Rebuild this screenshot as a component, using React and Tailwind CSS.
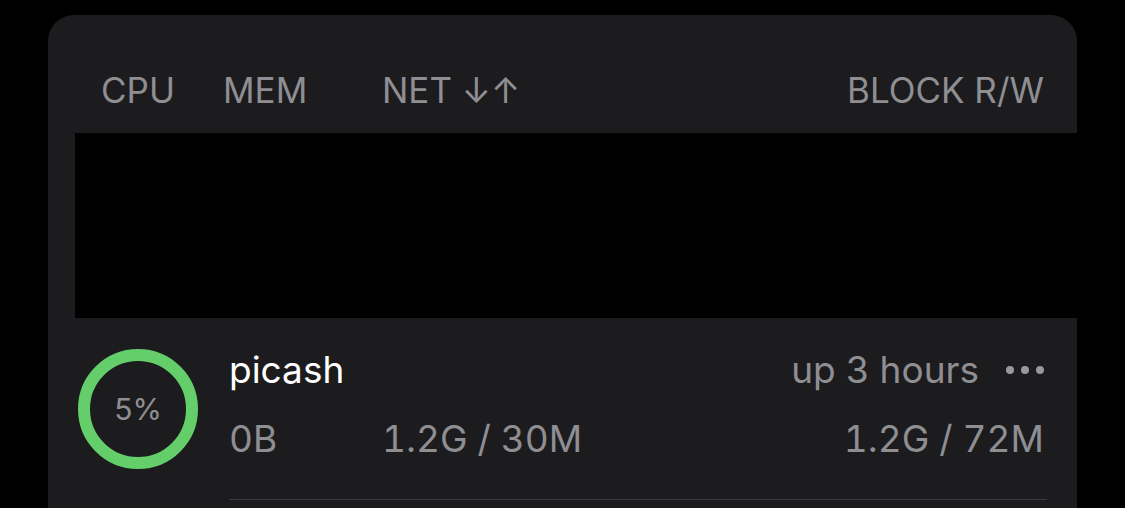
export default function App() {
  const font = { fontFamily: 'Inter, "Noto Sans", sans-serif' };
  return (
    <div className="w-[1125px] h-[508px] bg-black overflow-hidden" style={font}>
      <div className="ml-[48px] mt-[15px] w-[1029px] h-[600px] bg-[#1c1c1e] rounded-t-[26px]">
        <div className="h-[118px] flex items-center pl-[53px] pr-[33px] pt-[32px] text-[35px] text-[#8e8e93]">
          <div className="w-[122px]">CPU</div>
          <div className="w-[159px]">MEM</div>
          <div className="flex-1">NET ↓↑</div>
          <div>BLOCK R/W</div>
        </div>
        <div className="ml-[27px] h-[185px] bg-black" />
        <div className="flex pl-[30px]">
          <div className="pt-[31px]">
            <div className="relative w-[120px] h-[120px] rounded-full border-[12px] border-[#64cf6a] flex items-center justify-center">
              <span className="text-[30px] text-[#8e8e93]">5%</span>
            </div>
          </div>
          <div className="flex-1 ml-[31px] pr-[30px]">
            <div className="pr-[3px] border-b border-[#3a3a3c] h-[182px]">
              <div className="flex items-center justify-between pt-[33px] h-[71px]">
                <span className="text-[37px] text-white">picash</span>
                <div className="flex items-center">
                  <span className="text-[37px] text-[#8e8e93] tabular-nums">up 3 hours</span>
                  <div className="flex items-center gap-[7px] ml-[27px]">
                    <span className="w-[8px] h-[8px] rounded-full bg-[#98989f]" />
                    <span className="w-[8px] h-[8px] rounded-full bg-[#98989f]" />
                    <span className="w-[8px] h-[8px] rounded-full bg-[#98989f]" />
                  </div>
                </div>
              </div>
              <div className="flex items-center pt-[22px] text-[37px] text-[#8e8e93] tabular-nums">
                <span className="w-[153px]">0B</span>
                <span className="flex-1">1.2G / 30M</span>
                <span>1.2G / 72M</span>
              </div>
            </div>
          </div>
        </div>
      </div>
    </div>
  );
}
